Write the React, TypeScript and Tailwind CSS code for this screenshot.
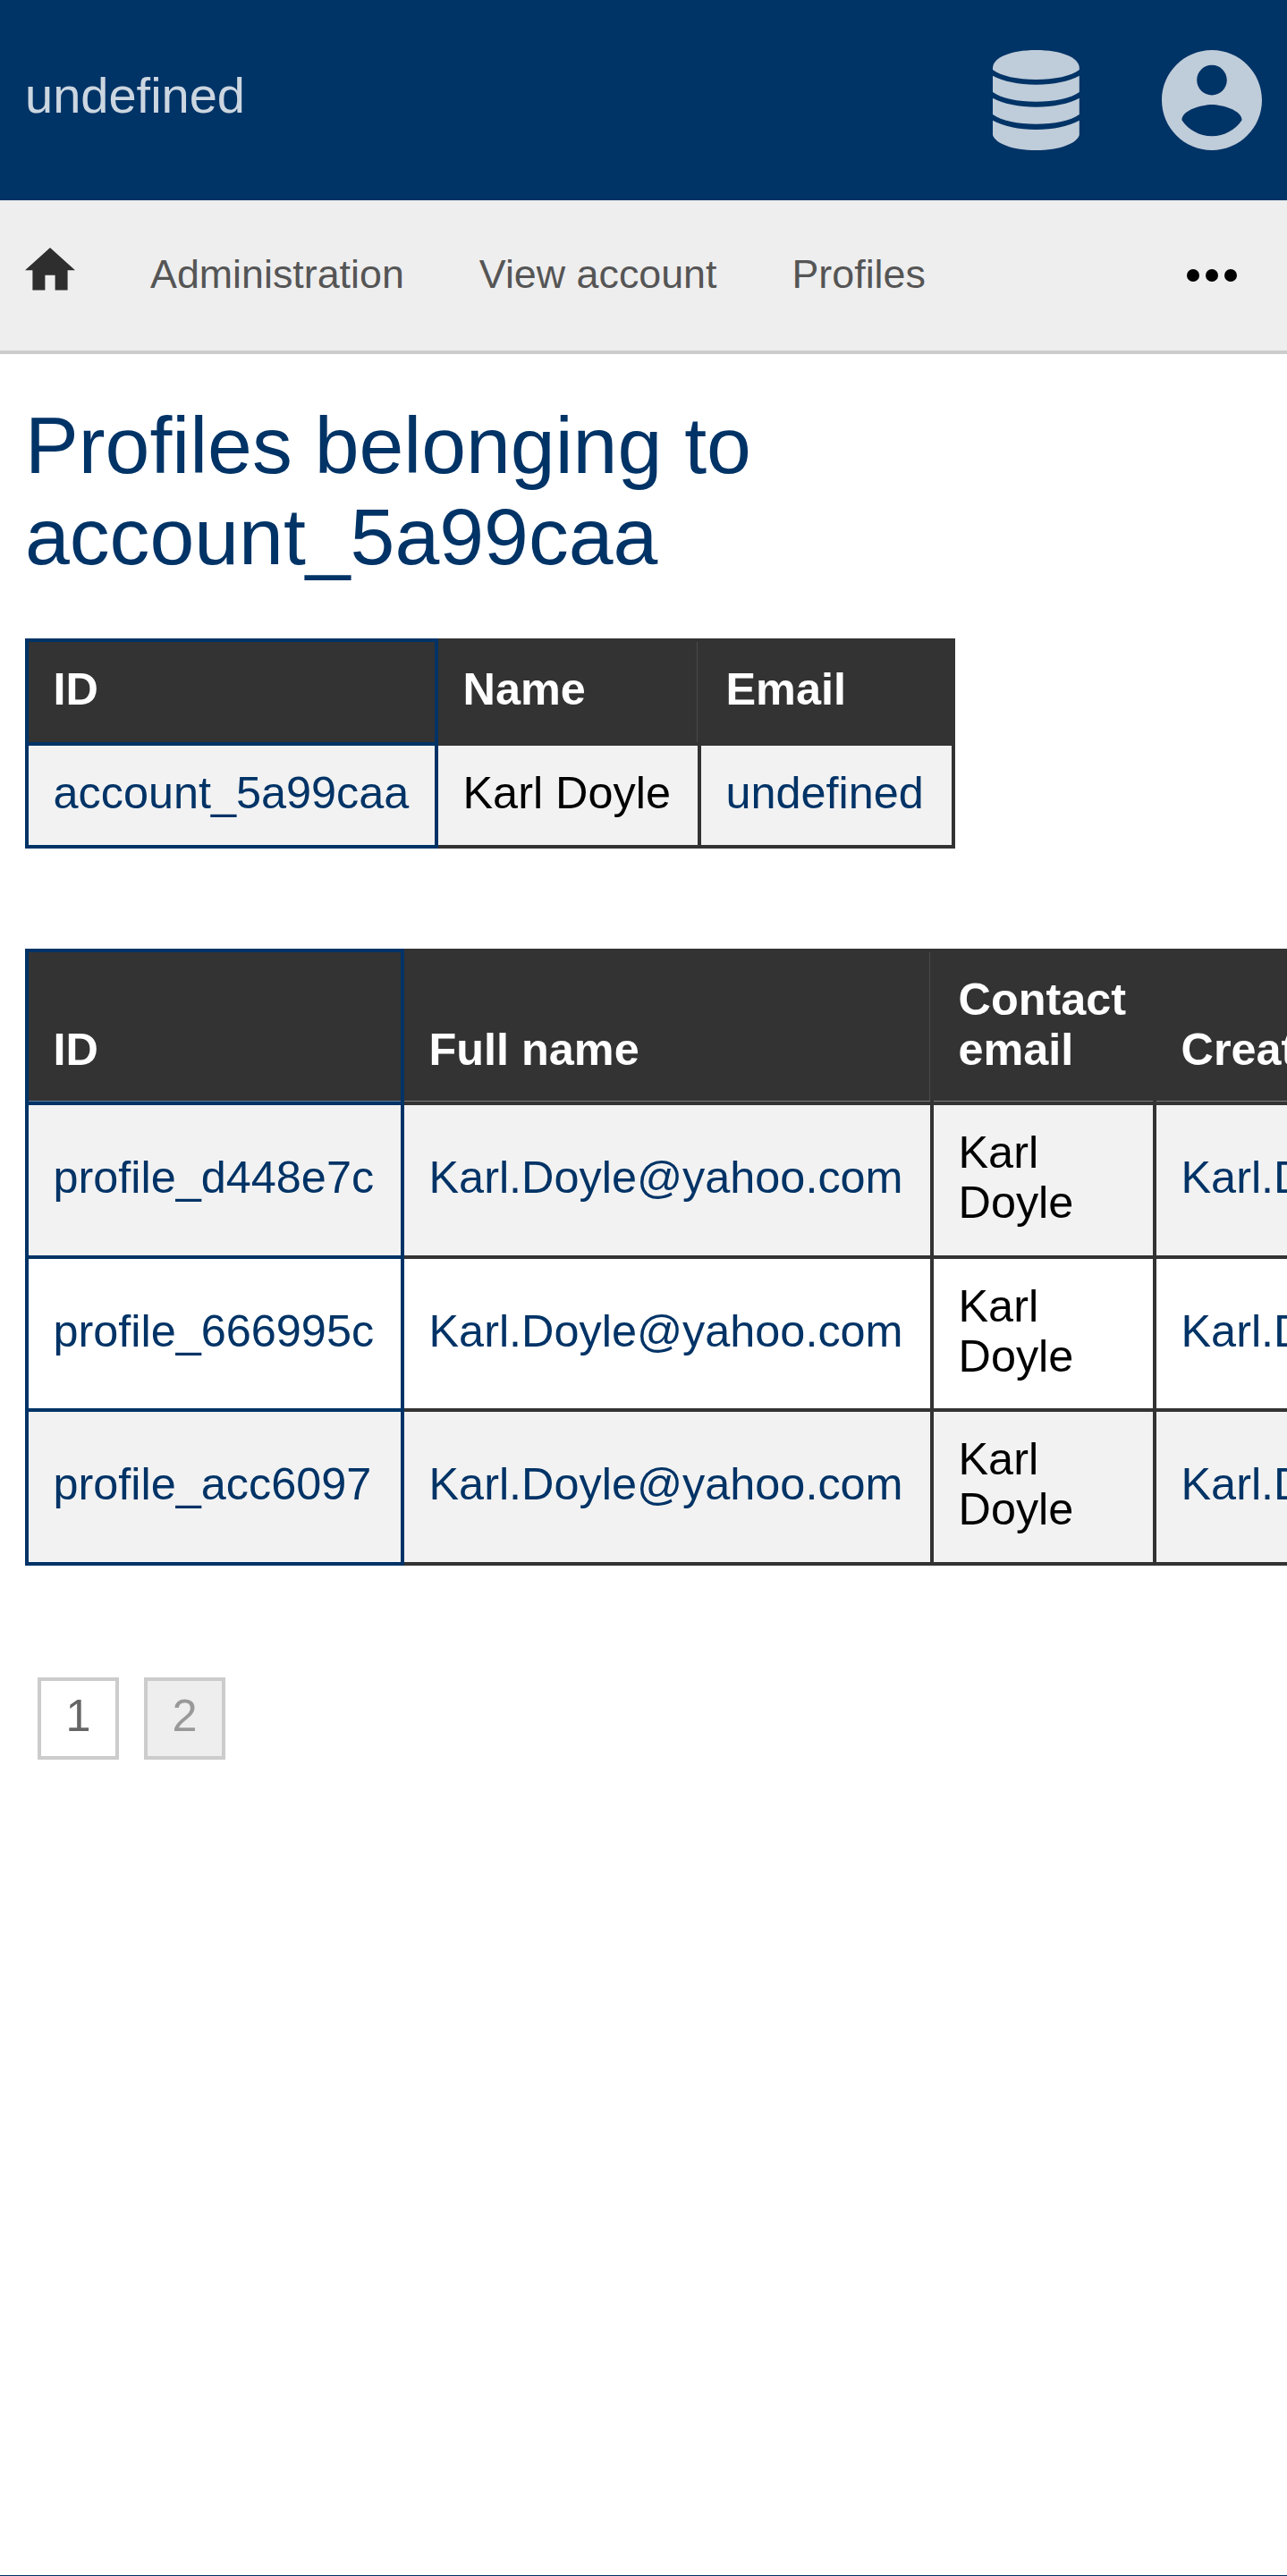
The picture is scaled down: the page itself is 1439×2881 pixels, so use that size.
import type { ReactNode } from "react";

function DatabaseIcon() {
  return (
    <svg className="h-28 w-[97px]" viewBox="0 0 97 112" fill="currentColor" aria-hidden="true">
      <path d="M0 20C0 8.5 20 0 48.4 0S96.8 8.5 96.8 20V22C88 29 69 33 48.4 33S9 29 0 22Z" />
      <path d="M0 28.7C12 35 29 38.7 48.4 38.7S85 35 96.8 28.7V47C87 54 69 57.8 48.4 57.8S10 54 0 47Z" />
      <path d="M0 53.7C12 60 29 63.7 48.4 63.7S85 60 96.8 53.7V72C87 79 69 82.8 48.4 82.8S10 79 0 72Z" />
      <path d="M0 78.8C12 85.2 29 89 48.4 89S85 85.2 96.8 78.8V95C94 104.5 75 112 48.4 112S3 104.5 0 95Z" />
    </svg>
  );
}

function AccountIcon() {
  return (
    <svg className="size-28" viewBox="2 2 20 20" fill="currentColor" aria-hidden="true">
      <path d="M12 2C6.48 2 2 6.48 2 12s4.48 10 10 10 10-4.48 10-10S17.52 2 12 2zm0 3c1.66 0 3 1.34 3 3s-1.34 3-3 3-3-1.34-3-3 1.34-3 3-3zm0 14.2c-2.5 0-4.71-1.28-6-3.22.03-1.99 4-3.08 6-3.08 1.99 0 5.97 1.09 6 3.08-1.29 1.94-3.5 3.22-6 3.22z" />
    </svg>
  );
}

function HomeIcon() {
  return (
    <svg className="h-[47.6px] w-14" viewBox="2 3 20 17" fill="currentColor" aria-hidden="true">
      <path d="M10 20v-6h4v6h5v-8h3L12 3 2 12h3v8z" />
    </svg>
  );
}

function MoreIcon() {
  return (
    <svg className="h-3.5 w-14" viewBox="0 0 16 4" fill="currentColor" aria-hidden="true">
      <circle cx="2" cy="2" r="2" />
      <circle cx="8" cy="2" r="2" />
      <circle cx="14" cy="2" r="2" />
    </svg>
  );
}

function Th({ children, primary = false }: { children: ReactNode; primary?: boolean }) {
  return (
    <th
      className={`border-4 px-[27.5px] pt-[25px] pb-[30px] text-left align-bottom font-bold text-white ${
        primary ? "border-[#003366]" : "border-[#333333]"
      }`}
    >
      {children}
    </th>
  );
}

function Td({ children, primary = false }: { children: ReactNode; primary?: boolean }) {
  return (
    <td
      className={`border-4 px-[27.5px] pt-[25px] pb-[30px] align-middle ${
        primary ? "border-[#003366]" : "border-[#333333]"
      }`}
    >
      {children}
    </td>
  );
}

function Link({ children }: { children: ReactNode }) {
  return <a className="text-[#003366]">{children}</a>;
}

const profiles = [
  { id: "profile_d448e7c", row: "h-[172px] bg-[#f2f2f2] [&>*]:pb-[31px]" },
  { id: "profile_666995c", row: "h-[171px] bg-white" },
  { id: "profile_acc6097", row: "h-[172px] bg-[#f2f2f2] [&>*]:pb-[31px]" },
];

export default function App() {
  return (
    <div className="flex h-[2881px] w-[1439px] flex-col overflow-hidden bg-white font-['Liberation_Sans',Arial,sans-serif] text-black">
      <header className="flex h-56 shrink-0 items-center justify-between bg-[#003366] px-7 text-[56px] leading-[64px] text-white/80">
        <span className="-mt-[11px]">undefined</span>
        <div className="flex items-center gap-[92px] text-[#bfccd9]">
          <DatabaseIcon />
          <AccountIcon />
        </div>
      </header>

      <nav className="flex h-[172px] shrink-0 items-center gap-[84px] border-b-4 border-[#cccccc] bg-[#eeeeee] pr-14 pl-7 text-[44.8px] leading-[52px] text-[#555555]">
        <a className="-mt-3.5 text-[#2e2e2e]">
          <HomeIcon />
        </a>
        <a className="-mt-1">Administration</a>
        <a className="-mt-1">View account</a>
        <a className="-mt-1">Profiles</a>
        <button className="ml-auto text-black" aria-label="More">
          <MoreIcon />
        </button>
      </nav>

      <main className="flex grow flex-col items-start px-7 pt-[51px] text-[50.4px] leading-[56px]">
        <h1 className="w-[1000px] text-[89.6px] leading-[102px] text-[#003366]">
          Profiles belonging to account_5a99caa
        </h1>

        <table className="mt-[63px] w-[1040px] shrink-0 table-fixed border-collapse">
          <colgroup>
            <col className="w-[458px]" />
            <col className="w-[294px]" />
            <col className="w-[284px]" />
          </colgroup>
          <thead>
            <tr className="h-[116px] bg-[#333333] [&>*]:pb-[31px] [&>:nth-child(2)]:shadow-[inset_-1px_0_0_#4a4a4a]">
              <Th primary>ID</Th>
              <Th>Name</Th>
              <Th>Email</Th>
            </tr>
          </thead>
          <tbody>
            <tr className="h-[115px] bg-[#f2f2f2]">
              <Td primary>
                <Link>account_5a99caa</Link>
              </Td>
              <Td>Karl Doyle</Td>
              <Td>
                <Link>undefined</Link>
              </Td>
            </tr>
          </tbody>
        </table>

        <table className="mt-28 w-[1857px] shrink-0 table-fixed border-collapse">
          <colgroup>
            <col className="w-[420px]" />
            <col className="w-[592px]" />
            <col className="w-[249px]" />
            <col className="w-[592px]" />
          </colgroup>
          <thead>
            <tr className="h-[171px] bg-[#333333] [&>*]:shadow-[inset_0_-1px_0_#7f7f7f] [&>:first-child]:shadow-[inset_0_-1px_0_#5f7f9f] [&>:nth-child(2)]:shadow-[inset_0_-1px_0_#7f7f7f,inset_-1px_0_0_#4a4a4a]">
              <Th primary>ID</Th>
              <Th>Full name</Th>
              <Th>Contact email</Th>
              <Th>Created</Th>
            </tr>
          </thead>
          <tbody>
            {profiles.map((profile) => (
              <tr key={profile.id} className={profile.row}>
                <Td primary>
                  <Link>{profile.id}</Link>
                </Td>
                <Td>
                  <Link>Karl.Doyle@yahoo.com</Link>
                </Td>
                <Td>Karl Doyle</Td>
                <Td>
                  <Link>Karl.Doyle@yahoo.com</Link>
                </Td>
              </tr>
            ))}
          </tbody>
        </table>

        <div className="mt-[125px] ml-3.5 flex gap-7">
          <a className="h-[92px] w-[91px] border-4 border-[#cccccc] bg-white pt-[11px] text-center text-[#666666]">1</a>
          <a className="h-[92px] w-[91px] border-4 border-[#cccccc] bg-[#eeeeee] pt-[11px] text-center text-[#999999]">2</a>
        </div>
      </main>

      <footer className="h-px shrink-0 bg-[#003366]" />
    </div>
  );
}
